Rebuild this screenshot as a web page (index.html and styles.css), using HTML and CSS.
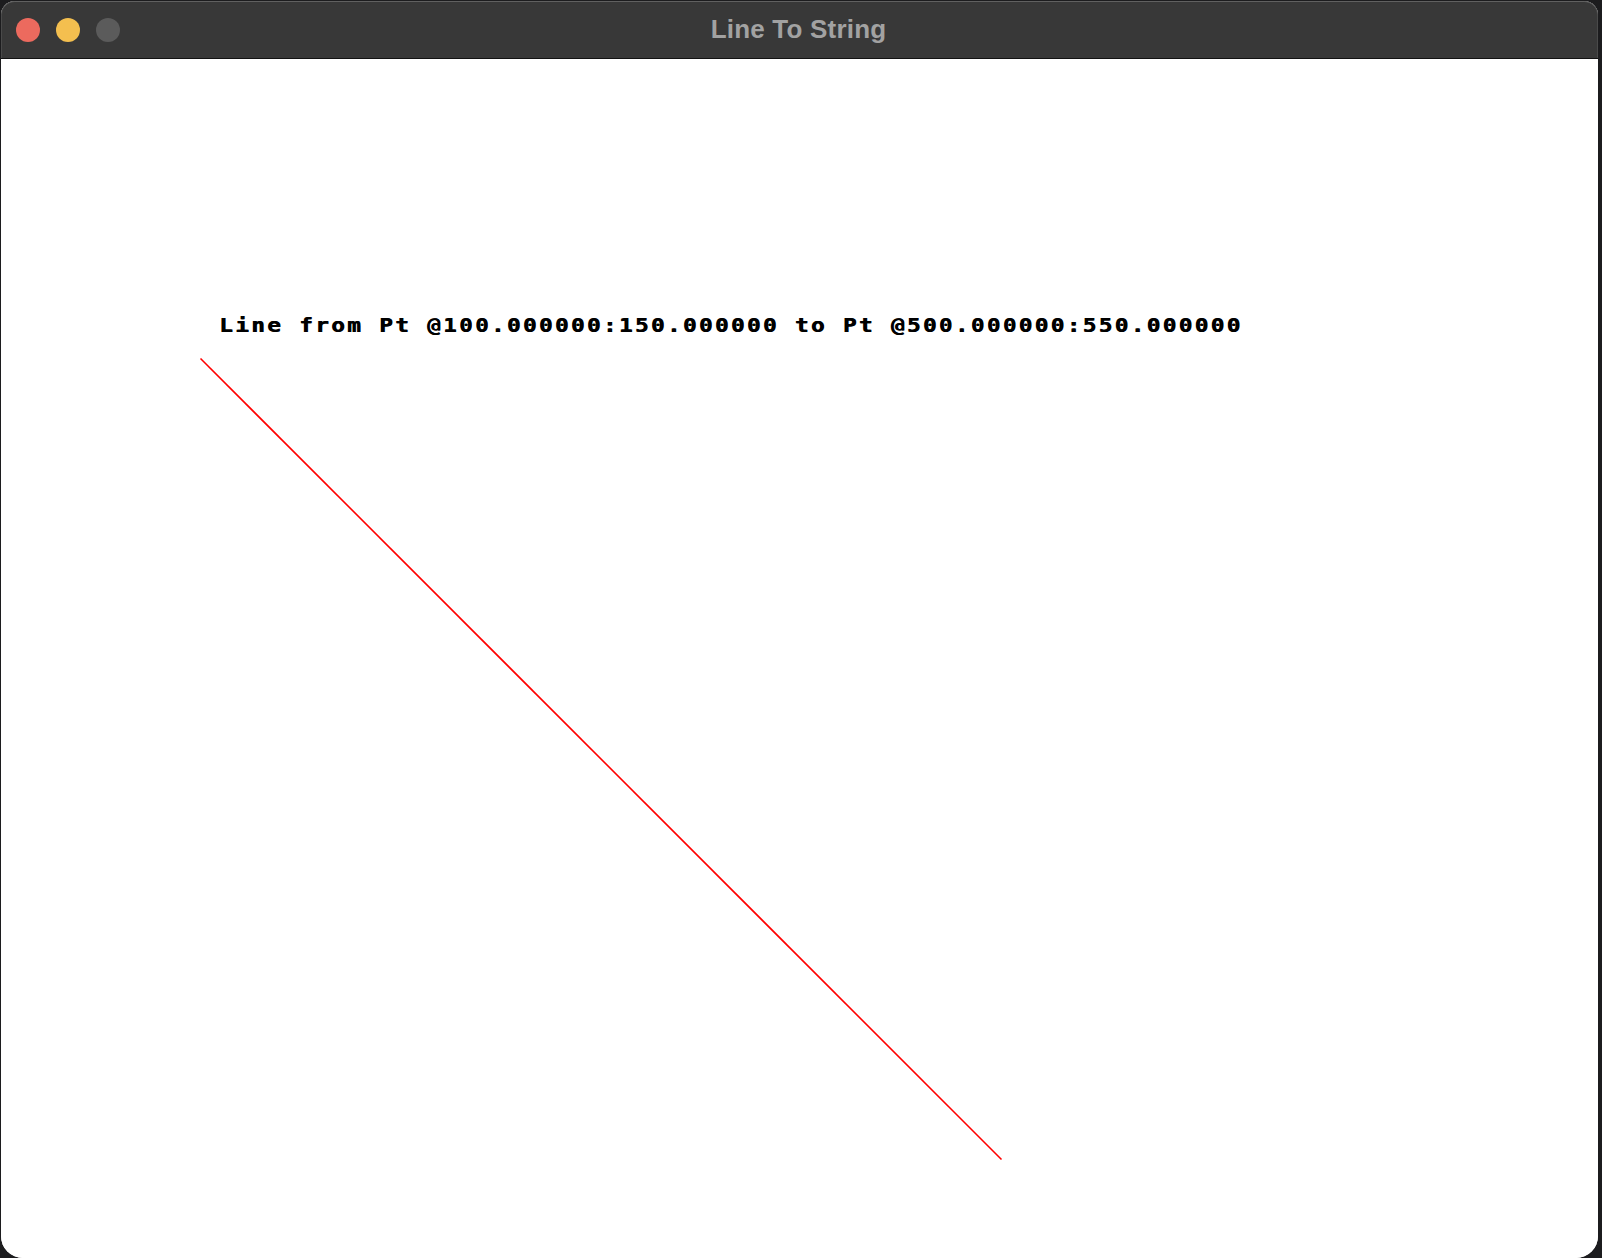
FILE: index.html
```html
<!DOCTYPE html>
<html lang="en">
<head>
<meta charset="utf-8">
<title>Line To String</title>
<link rel="stylesheet" href="styles.css">
</head>
<body>
  <div class="window">
    <header class="titlebar">
      <div class="lights">
        <span class="light close"></span>
        <span class="light minimize"></span>
        <span class="light zoom"></span>
      </div>
      <div class="title">Line To String</div>
    </header>
    <main class="canvas">
      <div class="label">Line from Pt @100.000000:150.000000 to Pt @500.000000:550.000000</div>
      <svg class="drawing" width="1597" height="1198" viewBox="0 0 1597 1198">
        <line x1="199.5" y1="299.5" x2="1000.5" y2="1100.5" stroke="#ff0000" stroke-width="1.6"/>
      </svg>
    </main>
  </div>
</body>
</html>
```

FILE: styles.css
```css
html, body {
  margin: 0;
  padding: 0;
  background: #1c1c1e;
  width: 1602px;
  height: 1258px;
  overflow: hidden;
}

.window {
  margin: 1px 0 0 1px;
  width: 1597px;
  height: 1257px;
  border-radius: 14px 14px 22px 22px;
  overflow: hidden;
  background: #ffffff;
  display: flex;
  flex-direction: column;
}

.titlebar {
  position: relative;
  height: 57px;
  flex: 0 0 57px;
  background: #383838;
  border-bottom: 1px solid #121212;
  box-shadow: inset 0 1px 0 #606060, inset 1px 0 0 #4a4a4a, inset -1px 0 0 #4a4a4a;
  border-radius: 14px 14px 0 0;
  display: flex;
  align-items: center;
  justify-content: center;
}

.lights {
  position: absolute;
  left: 15px;
  top: 17px;
  display: flex;
  gap: 16px;
}

.light {
  width: 24px;
  height: 24px;
  border-radius: 50%;
  display: block;
}

.close { background: #ec6a5e; }
.minimize { background: #f4bf4f; }
.zoom { background: #5b5b5b; }

.title {
  font-family: "Liberation Sans", Arial, sans-serif;
  font-weight: bold;
  font-size: 26px;
  letter-spacing: 0.2px;
  color: #a2a2a2;
  margin-left: -2px;
}

.canvas {
  position: relative;
  flex: 1 1 auto;
  background: #ffffff;
}

.label {
  position: absolute;
  left: 218px;
  top: 257px;
  font-family: "DejaVu Sans Mono", "Liberation Mono", monospace;
  font-weight: bold;
  font-size: 19px;
  line-height: 19px;
  letter-spacing: 2px;
  color: #000000;
  white-space: nowrap;
  text-shadow: 0.6px 0 0 #000000;
  transform: scaleX(1.19);
  transform-origin: 0 0;
}

.drawing {
  position: absolute;
  left: 0;
  top: 0;
}
```
